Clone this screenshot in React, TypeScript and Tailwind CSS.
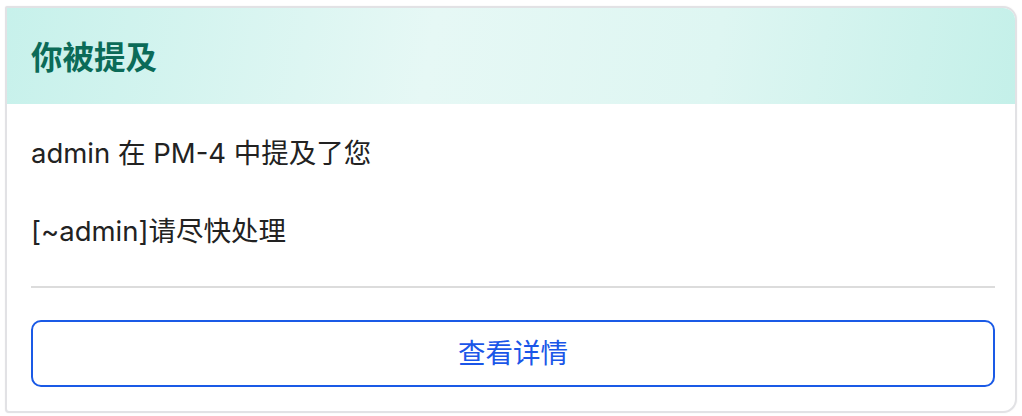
export default function App() {
  return (
    <div className="min-h-screen w-full bg-white pt-[6px] pl-[5px] font-['Inter','Noto_Sans_CJK_SC',sans-serif]">
      <div className="w-[1012px] h-[407px] overflow-hidden rounded-tl-[2px] rounded-bl-[4px] rounded-r-[14px] border-2 border-[#e2e2e5] bg-white shadow-[0_0_2px_rgba(0,0,0,0.06)]">
        <div className="h-[96px] flex items-center px-6 pb-[3px] bg-[linear-gradient(100deg,#c7f1eb_0%,#e6f8f5_42%,#def6f2_70%,#c4f0e9_100%)]">
          <h1 className="text-[31.5px] leading-[36px] font-bold text-[#0b6b58] font-['Noto_Sans_CJK_SC',sans-serif]">
            你被提及
          </h1>
        </div>
        <div className="pl-6 pr-5 pt-[31px]">
          <p className="text-[27.5px] leading-[36px] text-[#222222]">admin 在 PM-4 中提及了您</p>
          <p className="mt-[42px] text-[27.5px] leading-[36px] text-[#222222]">[~admin]请尽快处理</p>
          <div className="mt-[37px] h-[2px] bg-[#dcdcdc]" />
          <button className="mt-[32px] w-full h-[67px] rounded-[10px] border-2 border-[#1a5ae6] bg-white text-[27.5px] text-[#1a56e8] flex items-center justify-center">
            查看详情
          </button>
        </div>
      </div>
    </div>
  );
}
